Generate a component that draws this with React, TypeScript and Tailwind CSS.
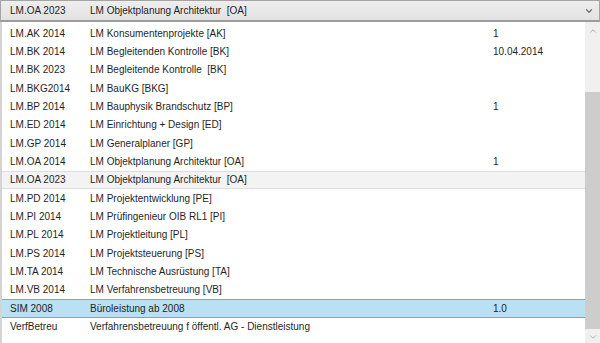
import { ChevronDown, ChevronUp } from "lucide-react";

type Row = { code: string; name: string; extra?: string; state?: "hover" | "selected" };

const rows: Row[] = [
  { code: "LM.AK 2014", name: "LM Konsumentenprojekte [AK]", extra: "1" },
  { code: "LM.BK 2014", name: "LM Begleitenden Kontrolle [BK]", extra: "10.04.2014" },
  { code: "LM.BK 2023", name: "LM Begleitende Kontrolle  [BK]" },
  { code: "LM.BKG2014", name: "LM BauKG [BKG]" },
  { code: "LM.BP 2014", name: "LM Bauphysik Brandschutz [BP]", extra: "1" },
  { code: "LM.ED 2014", name: "LM Einrichtung + Design [ED]" },
  { code: "LM.GP 2014", name: "LM Generalplaner [GP]" },
  { code: "LM.OA 2014", name: "LM Objektplanung Architektur [OA]", extra: "1" },
  { code: "LM.OA 2023", name: "LM Objektplanung Architektur  [OA]", state: "hover" },
  { code: "LM.PD 2014", name: "LM Projektentwicklung [PE]" },
  { code: "LM.PI 2014", name: "LM Prüfingenieur OIB RL1 [PI]" },
  { code: "LM.PL 2014", name: "LM Projektleitung [PL]" },
  { code: "LM.PS 2014", name: "LM Projektsteuerung [PS]" },
  { code: "LM.TA 2014", name: "LM Technische Ausrüstung [TA]" },
  { code: "LM.VB 2014", name: "LM Verfahrensbetreuung [VB]" },
  { code: "SIM 2008", name: "Büroleistung ab 2008", extra: "1.0", state: "selected" },
  { code: "VerfBetreu", name: "Verfahrensbetreuung f öffentl. AG - Dienstleistung" },
];

function ListRow({ row }: { row: Row }) {
  const tone =
    row.state === "selected"
      ? "border-[#55b2e4] bg-[#b9e0f3]"
      : row.state === "hover"
        ? "border-[#dedede] bg-[#f3f3f3]"
        : "border-transparent";
  return (
    <div className={`flex h-[18.35px] items-center border-y text-[10px] text-[#1f1f1f] ${tone}`}>
      <span className="w-[88px] shrink-0 pl-[8px]">{row.code}</span>
      <span className="w-[403px] shrink-0 whitespace-pre">{row.name}</span>
      <span>{row.extra}</span>
    </div>
  );
}

export default function App() {
  return (
    <div
      className="flex h-[343px] w-[600px] flex-col overflow-hidden bg-white"
      style={{ fontFamily: '"Liberation Sans", Arial, sans-serif' }}
    >
      <div className="flex h-[22px] shrink-0 items-center border border-b-2 border-[#a4a4a4] border-b-[#9c9c9c] bg-gradient-to-b from-[#eeeeee] to-[#e2e2e2] text-[10px] text-[#1f1f1f]">
        <span className="w-[89px] shrink-0 pl-[9px]">LM.OA 2023</span>
        <span className="flex-1 whitespace-pre">LM Objektplanung Architektur  [OA]</span>
        <ChevronDown size={10} strokeWidth={3} className="mr-[5px] text-[#707070]" />
      </div>

      <div className="flex min-h-0 flex-1">
        <div className="flex-1 border-l-2 border-[#d4d4d4] pt-[2px]">
          {rows.map((r) => (
            <ListRow key={r.code} row={r} />
          ))}
        </div>

        <div className="flex w-[15px] shrink-0 flex-col bg-[#f0f0f0]">
          <div className="flex h-[17px] shrink-0 items-center justify-center">
            <ChevronUp size={10} strokeWidth={2} className="text-[#a8a8a8]" />
          </div>
          <div className="h-[53px] shrink-0" />
          <div className="h-[237px] shrink-0 bg-[#cdcdcd]" />
          <div className="h-[1px] shrink-0" />
          <div className="flex h-[17px] shrink-0 items-start justify-center pt-[2px]">
            <ChevronDown size={10} strokeWidth={2} className="text-[#a8a8a8]" />
          </div>
        </div>
      </div>
    </div>
  );
}
